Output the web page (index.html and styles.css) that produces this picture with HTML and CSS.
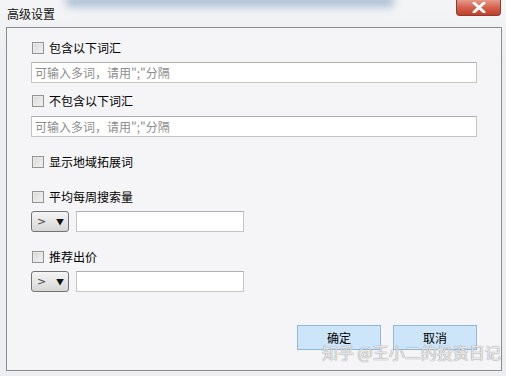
FILE: index.html
```html
<!DOCTYPE html>
<html lang="zh-CN">
<head>
    <meta charset="UTF-8">
    <title>高级设置</title>
    <link rel="stylesheet" href="styles.css">
</head>
<body>
    <div class="window">
        <div class="titlebar">
            <div class="glow"></div>
            <span class="title">高级设置</span>
            <span class="close">
                <svg width="16" height="11" viewBox="0 0 16 11"><path d="M3 1 L13 10 M13 1 L3 10" stroke="#fff" stroke-width="3" stroke-linecap="round"/></svg>
            </span>
        </div>
        <div class="panel">
            <label class="check first"><span class="box"></span>包含以下词汇</label>
            <input class="field wide" type="text" placeholder="可输入多词，请用&quot;;&quot;分隔">

            <label class="check second"><span class="box"></span>不包含以下词汇</label>
            <input class="field wide near" type="text" placeholder="可输入多词，请用&quot;;&quot;分隔">

            <label class="check third"><span class="box"></span>显示地域拓展词</label>

            <label class="check fourth"><span class="box"></span>平均每周搜索量</label>
            <div class="cmp-row">
                <span class="combo"><span class="op">&gt;</span><span class="arrow">&#9660;</span></span>
                <input class="field short" type="text">
            </div>

            <label class="check fifth"><span class="box"></span>推荐出价</label>
            <div class="cmp-row">
                <span class="combo"><span class="op">&gt;</span><span class="arrow">&#9660;</span></span>
                <input class="field short" type="text">
            </div>

            <div class="actions">
                <button class="btn">确定</button>
                <button class="btn">取消</button>
            </div>
        </div>
        <div class="watermark">知乎 @王小二的投资日记</div>
    </div>
</body>
</html>
```

FILE: styles.css
```css
body {
    margin: 0;
    background-color: #eceef1;
    font-family: "Noto Sans CJK SC", "Liberation Sans", sans-serif;
    font-size: 12px;
    color: #000;
}

.window {
    position: relative;
    width: 506px;
    height: 376px;
    overflow: hidden;
    background: linear-gradient(to bottom, #f4f5f7 0, #eceef1 60px, #eceef1 100%);
}

.titlebar {
    position: relative;
    height: 27px;
    display: flex;
    align-items: center;
}

.glow {
    position: absolute;
    left: 65px;
    top: -5px;
    width: 330px;
    height: 12px;
    background: #9fb6cd;
    border-radius: 8px;
    filter: blur(4px);
    opacity: 0.85;
}

.title {
    position: relative;
    margin-left: 7px;
    margin-top: -1px;
    color: #111;
}

.close {
    position: absolute;
    top: 0;
    right: 5px;
    width: 45px;
    height: 16px;
    display: flex;
    align-items: center;
    justify-content: center;
    background: linear-gradient(to bottom, #e79a8a 0, #d4614c 50%, #c0402b 100%);
    border: 1px solid #8a3a30;
    border-top: none;
    border-radius: 0 0 4px 4px;
    box-sizing: border-box;
}

.panel {
    margin: 0 4px 0 6px;
    height: 344px;
    box-sizing: border-box;
    border: 1px solid #8c8c8c;
    background-color: #f5f5f7;
    padding: 13px 24px 0 24px;
    display: flex;
    flex-direction: column;
    align-items: flex-start;
}

.check {
    display: flex;
    align-items: center;
    height: 14px;
    line-height: 14px;
    padding-left: 1px;
}

.second { margin-top: 11px; }
.third { margin-top: 18px; }
.fourth { margin-top: 21px; }
.fifth { margin-top: 18px; }

.box {
    width: 12px;
    height: 12px;
    box-sizing: border-box;
    border: 1px solid #939393;
    background: linear-gradient(135deg, #d8d8d8 0, #f2f2f2 100%);
    box-shadow: inset 0 0 0 1px #ececec;
    margin-right: 5px;
}

.field {
    height: 21px;
    box-sizing: border-box;
    border: 1px solid #c4c4c4;
    border-top-color: #b0b0b0;
    background-color: #fff;
    font-family: inherit;
    font-size: 12px;
    padding: 0 3px;
    margin: 0;
    outline: none;
}

.field::placeholder {
    color: #8d8d8d;
}

.wide {
    width: 446px;
    margin-top: 7px;
}

.near {
    margin-top: 8px;
}

.short {
    width: 168px;
}

.cmp-row {
    display: flex;
    gap: 7px;
    margin-top: 7px;
}

.combo {
    width: 38px;
    height: 21px;
    box-sizing: border-box;
    border: 1px solid #737373;
    border-radius: 3px;
    background: linear-gradient(to bottom, #f4f4f4 0, #e6e6e6 50%, #d6d6d6 100%);
    display: flex;
    align-items: center;
    justify-content: space-between;
    padding: 0 4px 0 5px;
}

.op {
    color: #444;
    font-family: "DejaVu Sans", sans-serif;
    font-size: 11px;
}

.arrow {
    font-size: 8px;
    color: #111;
}

.actions {
    align-self: flex-end;
    display: flex;
    gap: 12px;
    margin-top: 33px;
}

.btn {
    width: 84px;
    height: 25px;
    border: 1px solid #8fb8de;
    background-color: #cde5f8;
    font-family: inherit;
    font-size: 12px;
    color: #000;
    padding: 0;
}

.watermark {
    position: absolute;
    left: 322px;
    top: 341px;
    white-space: nowrap;
    font-size: 16px;
    line-height: 22px;
    color: rgba(255, 255, 255, 0.75);
    text-shadow: 0 0 1px #999, 0 0 1px #999;
}
```
